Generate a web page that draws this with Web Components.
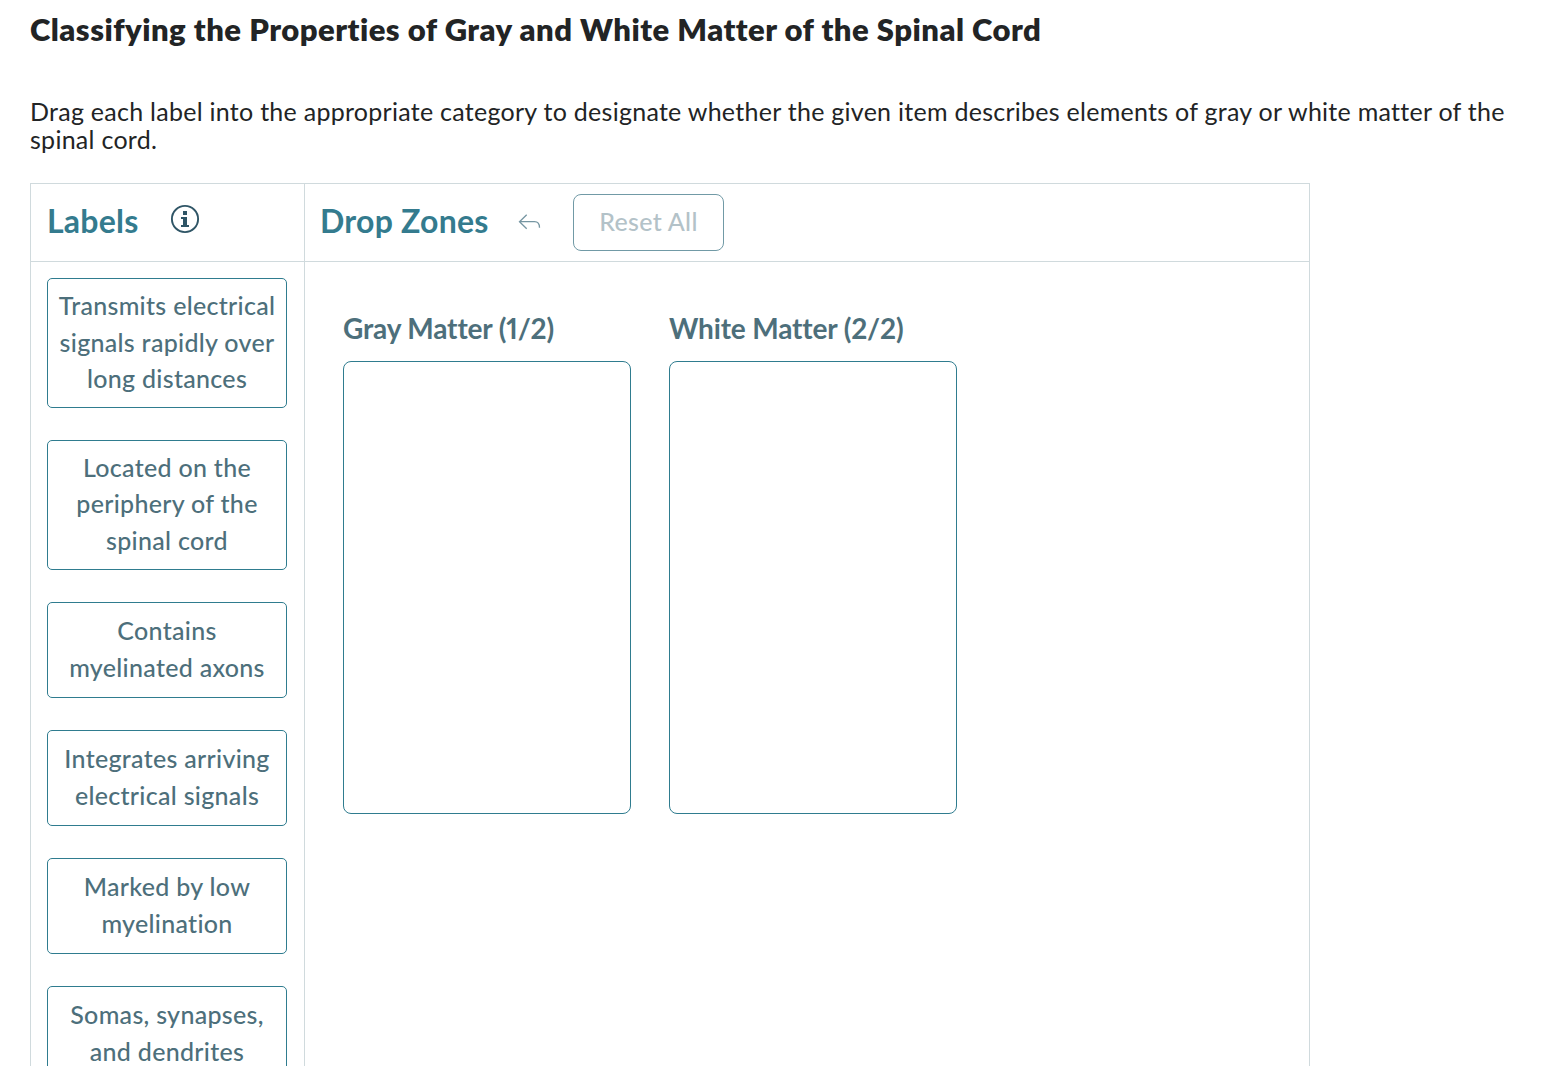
<!DOCTYPE html>
<html lang="en">
<head>
<meta charset="utf-8">
<title>Gray and White Matter</title>
<style>
  body {
    margin: 0;
    height: 1066px;
    overflow: hidden;
    background: #fff;
    color: #222425;
    font-family: Lato, "Open Sans", sans-serif;
  }
</style>
</head>
<body>
<classify-activity>
  <span slot="title">Classifying the Properties of Gray and White Matter of the Spinal Cord</span>
  <span slot="prompt">Drag each label into the appropriate category to designate whether the given item describes elements of gray or white matter of the spinal cord.</span>
  <drag-label>Transmits electrical signals rapidly over long distances</drag-label>
  <drag-label>Located on the periphery of the spinal cord</drag-label>
  <drag-label>Contains myelinated axons</drag-label>
  <drag-label>Integrates arriving electrical signals</drag-label>
  <drag-label>Marked by low myelination</drag-label>
  <drag-label>Somas, synapses, and dendrites</drag-label>
  <drop-zone slot="zones">Gray Matter (1/2)</drop-zone>
  <drop-zone slot="zones">White Matter (2/2)</drop-zone>
</classify-activity>

<script>
function define(tagName, html) {
  const template = document.createElement("template")
  template.innerHTML = html
  customElements.define(tagName, class extends HTMLElement {
    constructor() {
      super()
      this.attachShadow({ mode: "open" }).append(template.content.cloneNode(true))
    }
  })
}

define("drag-label", `
  <style>
    :host {
      display: flex;
      flex: none;
      align-items: center;
      justify-content: center;
      box-sizing: border-box;
      min-height: 96px;
      padding: 8px 5px 10px;
      border: 1px solid #2f7c8f;
      border-radius: 5px;
      color: #4d6f7b;
      font-size: 25px;
      font-weight: 500;
      line-height: 36.6px;
      letter-spacing: 0.3px;
      text-align: center;
      cursor: grab;
    }
  </style>
  <span><slot></slot></span>
`)

define("drop-zone", `
  <style>
    :host {
      display: block;
      width: 288px;
    }

    h3 {
      margin: 0 0 15px;
      color: #4d6f7b;
      font-size: 28px;
      font-weight: 700;
      font-variant-numeric: proportional-nums;
      line-height: 36px;
      letter-spacing: -0.15px;
      white-space: nowrap;
    }

    .target {
      box-sizing: border-box;
      height: 453px;
      border: 1px solid #2f7c8f;
      border-radius: 8px;
    }
  </style>
  <h3><slot></slot></h3>
  <div class="target"></div>
`)

define("info-icon", `
  <style>
    :host {
      display: block;
      width: 30px;
      height: 30px;
    }

    svg {
      display: block;
    }
  </style>
  <svg width="30" height="30" viewBox="0 0 30 30">
    <circle cx="15" cy="15" r="13.1" fill="none" stroke="#2f5566" stroke-width="1.9"/>
    <path fill="#2f5566" d="M13 7h4v4h-4zM11 13h6v8h2v2h-8v-2h2v-6h-2z"/>
  </svg>
`)

define("undo-icon", `
  <style>
    :host {
      display: block;
      width: 24px;
      height: 18px;
    }

    svg {
      display: block;
    }
  </style>
  <svg width="24" height="18" viewBox="0 0 24 18" fill="none" stroke="#7696a2" stroke-width="1.3">
    <path d="M8.7 1.7L1.5 8.7l7.2 7M1.5 8.7h15c3.2 0 5 2 5 6"/>
  </svg>
`)

define("reset-button", `
  <style>
    :host {
      display: block;
    }

    button {
      display: block;
      width: 151px;
      height: 57px;
      padding: 0 0 4px;
      border: 1px solid #719aa6;
      border-radius: 8px;
      background: #fff;
      color: #b3c2c8;
      font: 500 25px/36px Lato, "Open Sans", sans-serif;
      letter-spacing: 0.3px;
    }
  </style>
  <button type="button" disabled><slot></slot></button>
`)

define("classify-activity", `
  <style>
    :host {
      display: flex;
      flex-direction: column;
      box-sizing: border-box;
      height: 1066px;
      padding: 10px 30px 0;
      overflow: hidden;
    }

    h1 {
      margin: 0;
      font-size: 31px;
      font-weight: 800;
      line-height: 38px;
      letter-spacing: 0.48px;
      white-space: nowrap;
    }

    p {
      width: 1490px;
      margin: 49px 0 0;
      font-size: 25px;
      line-height: 28px;
      letter-spacing: 0.27px;
    }

    .board {
      display: grid;
      flex: 1;
      grid-template-columns: 273px 1fr;
      grid-template-rows: 77px minmax(0, 1fr);
      gap: 1px;
      box-sizing: border-box;
      width: 1280px;
      min-height: 0;
      margin-top: 30px;
      border: 1px solid #d0dadd;
      border-bottom: 0;
      background: #d0dadd;
    }

    .board > * {
      background: #fff;
    }

    header {
      display: flex;
      align-items: center;
      padding-left: 16px;
    }

    h2 {
      margin: 0 0 4px;
      color: #347b8e;
      font-size: 32px;
      font-weight: 700;
      line-height: 40px;
      letter-spacing: 0.25px;
      white-space: nowrap;
    }

    .labels-title {
      width: 123px;
    }

    .zones-title {
      width: 198px;
    }

    .zones-header {
      padding-left: 15px;
    }

    info-icon {
      margin-bottom: 7px;
    }

    undo-icon {
      margin-bottom: 1px;
    }

    reset-button {
      margin-left: 31px;
    }

    .labels {
      display: flex;
      flex-direction: column;
      gap: 32px;
      padding: 16px 17px 0 16px;
      overflow: hidden;
    }

    .zones {
      display: flex;
      align-items: flex-start;
      gap: 38px;
      padding: 48px 0 0 38px;
    }
  </style>
  <h1><slot name="title"></slot></h1>
  <p><slot name="prompt"></slot></p>
  <section class="board">
    <header>
      <h2 class="labels-title">Labels</h2>
      <info-icon></info-icon>
    </header>
    <header class="zones-header">
      <h2 class="zones-title">Drop Zones</h2>
      <undo-icon></undo-icon>
      <reset-button>Reset All</reset-button>
    </header>
    <div class="labels"><slot></slot></div>
    <div class="zones"><slot name="zones"></slot></div>
  </section>
`)
</script>
</body>
</html>
